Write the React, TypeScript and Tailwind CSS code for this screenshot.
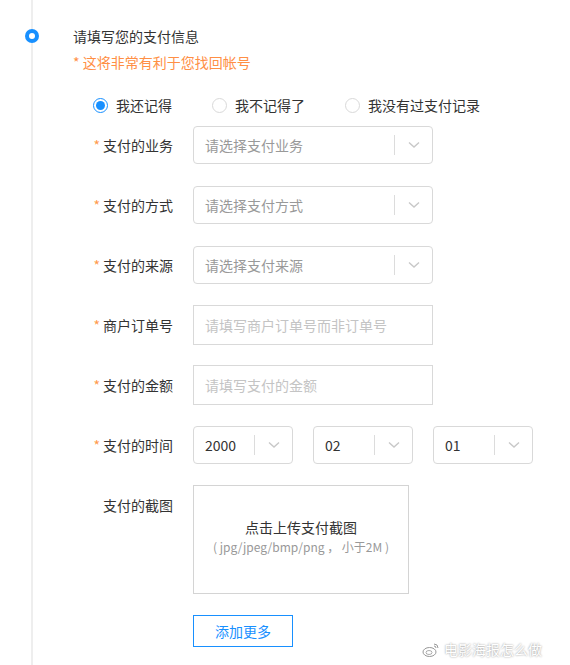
import React from "react";

const font = { fontFamily: '"Noto Sans CJK SC", "Noto Sans", sans-serif' };

const Chevron = () => (
    <svg width="12" height="8" viewBox="0 0 12 8" fill="none">
        <path d="M1 1.5 L6 6 L11 1.5" stroke="#c8c8c8" strokeWidth="1.4" />
    </svg>
);

type SelectProps = { text: string; placeholder?: boolean; width: string };

const Select = ({ text, placeholder, width }: SelectProps) => (
    <div
        className={`flex h-[38px] ${width} items-center rounded border border-[#d9d9d9] bg-white`}
    >
        <span
            className={`flex-1 pl-[11px] text-[14px] ${placeholder ? "text-[#999]" : "text-[#333]"}`}
        >
            {text}
        </span>
        <span className="h-[20px] w-px bg-[#dcdcdc]" />
        <span className="flex w-[37px] items-center justify-center">
            <Chevron />
        </span>
    </div>
);

const Input = ({ placeholder }: { placeholder: string }) => (
    <div className="flex h-[40px] w-[240px] items-center border border-[#d9d9d9] bg-white pl-[11px] text-[14px] text-[#c4c4c4]">
        {placeholder}
    </div>
);

const Row = ({ label, required = true, children }: { label: string; required?: boolean; children: React.ReactNode }) => (
    <div className="flex h-[60px] items-center">
        <div className="w-[100px] text-right text-[14px] text-[#333]">
            {required && <span className="mr-[3px] text-[#ff9a4d]">*</span>}
            {label}
        </div>
        <div className="ml-[20px] flex items-center">{children}</div>
    </div>
);

const Radio = ({ checked, label, className }: { checked?: boolean; label: string; className?: string }) => (
    <div className={`flex items-center ${className ?? ""}`}>
        <span
            className={`flex h-[15px] w-[15px] items-center justify-center rounded-full border ${checked ? "border-[#1890ff]" : "border-[#d9d9d9]"}`}
        >
            {checked && <span className="h-[9px] w-[9px] rounded-full bg-[#1890ff]" />}
        </span>
        <span className="ml-[8px] text-[14px] text-[#333]">{label}</span>
    </div>
);

export default function App() {
    return (
        <div className="relative flex min-h-[665px] w-[570px] overflow-hidden bg-white" style={font}>
            {/* timeline */}
            <div className="relative flex w-[64px] justify-center">
                <div className="w-[2px] bg-[#eeeeee]" />
                <span className="absolute top-[29px] left-[25px] flex h-[14px] w-[14px] items-center justify-center rounded-full bg-[#1890ff]">
                    <span className="h-[6px] w-[6px] rounded-full bg-white" />
                </span>
            </div>

            <div className="ml-[9px] flex flex-col pt-[26px]">
                <div className="text-[14px] leading-5 text-[#333]">请填写您的支付信息</div>
                <div className="mt-[6px] text-[14px] leading-5 text-[#ff8f45]">* 这将非常有利于您找回帐号</div>

                <div className="mt-[23px] flex h-5 items-center pl-[20px]">
                    <Radio checked label="我还记得" />
                    <Radio label="我不记得了" className="ml-[40px]" />
                    <Radio label="我没有过支付记录" className="ml-[40px]" />
                </div>

                <Row label="支付的业务">
                    <Select text="请选择支付业务" placeholder width="w-[240px]" />
                </Row>
                <Row label="支付的方式">
                    <Select text="请选择支付方式" placeholder width="w-[240px]" />
                </Row>
                <Row label="支付的来源">
                    <Select text="请选择支付来源" placeholder width="w-[240px]" />
                </Row>
                <Row label="商户订单号">
                    <Input placeholder="请填写商户订单号而非订单号" />
                </Row>
                <Row label="支付的金额">
                    <Input placeholder="请填写支付的金额" />
                </Row>
                <Row label="支付的时间">
                    <div className="flex gap-[20px]">
                        <Select text="2000" width="w-[100px]" />
                        <Select text="02" width="w-[100px]" />
                        <Select text="01" width="w-[100px]" />
                    </div>
                </Row>

                <div className="mt-[10px] flex">
                    <div className="w-[100px] pt-[10px] text-right text-[14px] leading-5 text-[#333]">支付的截图</div>
                    <div className="ml-[20px] flex flex-col">
                        <div className="flex h-[109px] w-[216px] flex-col items-center justify-center border border-[#d4d4d4] pb-[6px]">
                            <span className="text-[14px] leading-5 text-[#333]">点击上传支付截图</span>
                            <span className="text-[12px] leading-5 text-[#999]">( jpg/jpeg/bmp/png ， 小于2M )</span>
                        </div>
                        <button className="mt-[21px] h-[32px] w-[100px] border border-[#1890ff] bg-white text-[14px] text-[#1890ff]">
                            添加更多
                        </button>
                    </div>
                </div>
            </div>

            {/* watermark */}
            <div className="absolute right-[28px] bottom-[5px] flex items-center gap-[4px] text-[14px] text-white [text-shadow:0_0_2px_#888]">
                <svg width="18" height="16" viewBox="0 0 18 16" fill="none">
                    <ellipse cx="7.5" cy="10" rx="6.5" ry="4.5" stroke="#999" strokeWidth="1" fill="white" />
                    <ellipse cx="7" cy="10.5" rx="3" ry="2" stroke="#999" strokeWidth="0.8" />
                    <path d="M12 2 A4 4 0 0 1 16 6" stroke="#999" strokeWidth="1" />
                    <path d="M12 4 A2 2 0 0 1 14 6" stroke="#999" strokeWidth="1" />
                </svg>
                <span>电影海报怎么做</span>
            </div>
        </div>
    );
}
